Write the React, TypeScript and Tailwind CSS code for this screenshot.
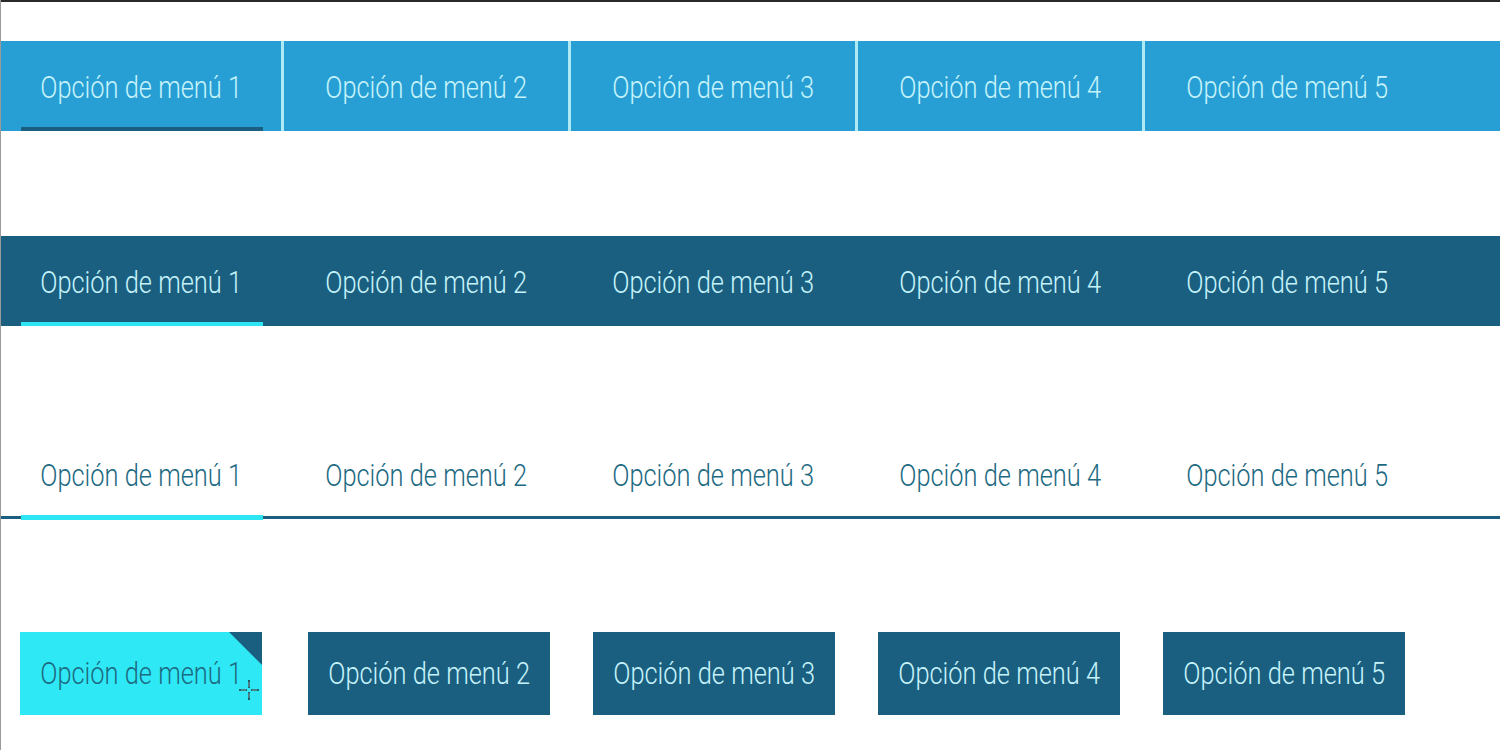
import React from 'react';

const items = ['Opción de menú 1', 'Opción de menú 2', 'Opción de menú 3', 'Opción de menú 4', 'Opción de menú 5'];

function Label({ text, className }: { text: string; className: string }) {
  return (
    <span className={`inline-block whitespace-nowrap font-light text-[31px] leading-none scale-x-[0.82] ${className}`}>
      {text}
    </span>
  );
}

function BarRow({ variant }: { variant: 'light' | 'dark' | 'flat' }) {
  const bg = variant === 'light' ? 'bg-[#279fd4]' : variant === 'dark' ? 'bg-[#1a5f7f]' : 'bg-white';
  const textColor = variant === 'flat' ? 'text-[#1d6a82]' : 'text-[#c6f3fb]';
  const marker = variant === 'light' ? 'bg-[#1a5f7f]' : 'bg-[#2ee6f3]';
  return (
    <div className={`relative flex h-[90px] w-full ${bg}`}>
      {variant === 'flat' && <div className="absolute bottom-0 left-0 right-0 h-[3px] bg-[#1a5f7f]" />}
      {items.map((t, i) => (
        <React.Fragment key={t}>
          {i > 0 && <div className={`w-[3px] shrink-0 ${variant === 'light' ? 'bg-[#aee9f6]' : ''}`} />}
          <div className={`relative flex shrink-0 items-center justify-center ${i === 0 ? 'w-[280px]' : 'w-[284px]'}`}>
            <Label text={t} className={`${textColor} mt-[2px]`} />
            {i === 0 && (
              <div className={`absolute left-[20px] w-[242px] ${marker} ${variant === 'flat' ? 'bottom-[-1px] h-[5px]' : 'bottom-0 h-[4px]'}`} />
            )}
          </div>
        </React.Fragment>
      ))}
    </div>
  );
}

export default function App() {
  return (
    <div className="relative h-[750px] w-[1500px] overflow-hidden border-l border-[#9a9a9a] bg-white font-['Roboto','Liberation_Sans',sans-serif]">
      <div className="h-[2px] w-full bg-[#2a2a2a]" />
      <div className="pt-[39px]">
        <BarRow variant="light" />
      </div>
      <div className="pt-[105px]">
        <BarRow variant="dark" />
      </div>
      <div className="pt-[103px]">
        <BarRow variant="flat" />
      </div>
      <div className="flex pl-[19px] pt-[113px]">
        {items.map((t, i) => (
          <div
            key={t}
            className={`relative flex h-[83px] w-[242px] shrink-0 items-center justify-center ${
              i === 0 ? 'mr-[46px] bg-[#2ee9f5]' : i < 4 ? 'mr-[43px] bg-[#1a5f7f]' : 'bg-[#1a5f7f]'
            }`}
          >
            <Label text={t} className={i === 0 ? 'text-[#1d6a82]' : 'text-[#c6f3fb]'} />
            {i === 0 && (
              <>
                <div className="absolute right-0 top-0 h-0 w-0 border-l-[33px] border-t-[33px] border-l-transparent border-t-[#1a5f7f]" />
                <svg className="absolute left-[218px] top-[47px]" width="22" height="22" viewBox="0 0 22 22">
                  <path d="M11 1v8M11 13v8M1 11h8M13 11h8" stroke="#1a3b46" strokeWidth="1.6" />
                  <path d="M11 3v5M11 14v5M3 11h5M14 11h5" stroke="#ffffff" strokeWidth="0.6" opacity="0.7" />
                </svg>
              </>
            )}
          </div>
        ))}
      </div>
    </div>
  );
}
